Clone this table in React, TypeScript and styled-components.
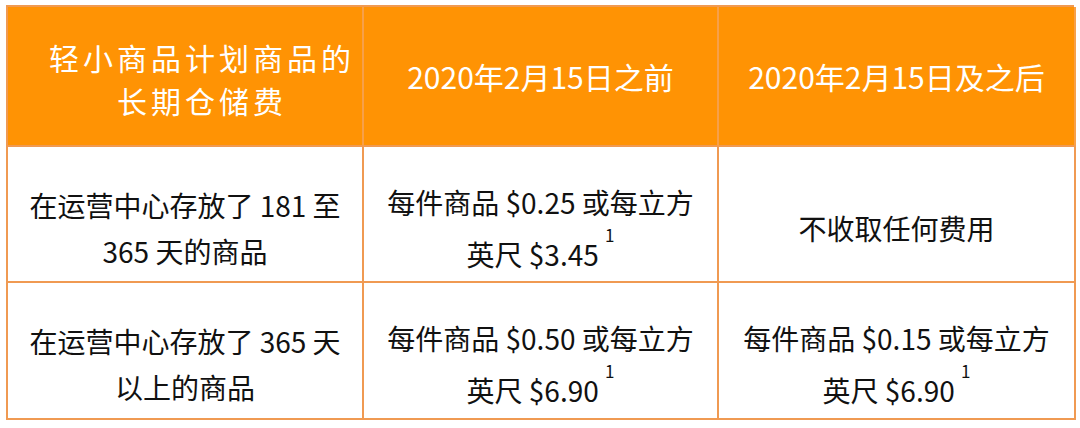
import React from "react";
import styled, { createGlobalStyle } from "styled-components";

const Global = createGlobalStyle`
  html, body { margin: 0; padding: 0; background: #ffffff; }
  body { font-family: "Noto Sans CJK SC", "Noto Sans", sans-serif; }
`;

const Page = styled.div`
  padding: 5px 0 0 6px;
`;

const Table = styled.div`
  display: grid;
  width: 1068px;
  grid-template-columns: 356px 355px 357px;
  grid-template-rows: 140px 136px 137px;
  border-top: 2px solid #f09a52;
  border-left: 2px solid #f09a52;
  box-sizing: border-box;
`;

const Cell = styled.div<{ $head?: boolean; $pt?: number; $pl?: number; $ls?: number }>`
  box-sizing: border-box;
  display: flex;
  align-items: center;
  justify-content: center;
  text-align: center;
  border-right: 2px solid ${(p) => (p.$head ? "#f7a04a" : "#f09a52")};
  border-bottom: 2px solid #f09a52;
  background: ${(p) => (p.$head ? "#ff9304" : "#ffffff")};
  color: ${(p) => (p.$head ? "#ffffff" : "#111111")};
  font-size: ${(p) => (p.$head ? 30 : 28)}px;
  line-height: ${(p) => (p.$head ? 43 : 46)}px;
  letter-spacing: ${(p) => p.$ls ?? 0}px;
  padding-top: ${(p) => p.$pt ?? 0}px;
  padding-left: ${(p) => p.$pl ?? 0}px;
`;

const Sup = styled.span`
  font-size: 17px;
  line-height: 1.2;
  vertical-align: 24px;
`;

export default function App() {
  return (
    <>
      <Global />
      <Page>
        <Table>
          <Cell $head $pt={6} $pl={34} $ls={4}>
            <div>
              轻小商品计划商品的
              <br />
              长期仓储费
            </div>
          </Cell>
          <Cell $head $pt={0}>
            2020年2月15日之前
          </Cell>
          <Cell $head $pt={0}>
            2020年2月15日及之后
          </Cell>

          <Cell $pt={27}>
            <div>
              在运营中心存放了 181 至
              <br />
              365 天的商品
            </div>
          </Cell>
          <Cell $pt={27}>
            <div>
              每件商品 $0.25 或每立方
              <br />
              英尺 $3.45 <Sup>1</Sup>
            </div>
          </Cell>
          <Cell $pt={27}>不收取任何费用</Cell>

          <Cell $pt={27}>
            <div>
              在运营中心存放了 365 天
              <br />
              以上的商品
            </div>
          </Cell>
          <Cell $pt={27}>
            <div>
              每件商品 $0.50 或每立方
              <br />
              英尺 $6.90 <Sup>1</Sup>
            </div>
          </Cell>
          <Cell $pt={27}>
            <div>
              每件商品 $0.15 或每立方
              <br />
              英尺 $6.90 <Sup>1</Sup>
            </div>
          </Cell>
        </Table>
      </Page>
    </>
  );
}
